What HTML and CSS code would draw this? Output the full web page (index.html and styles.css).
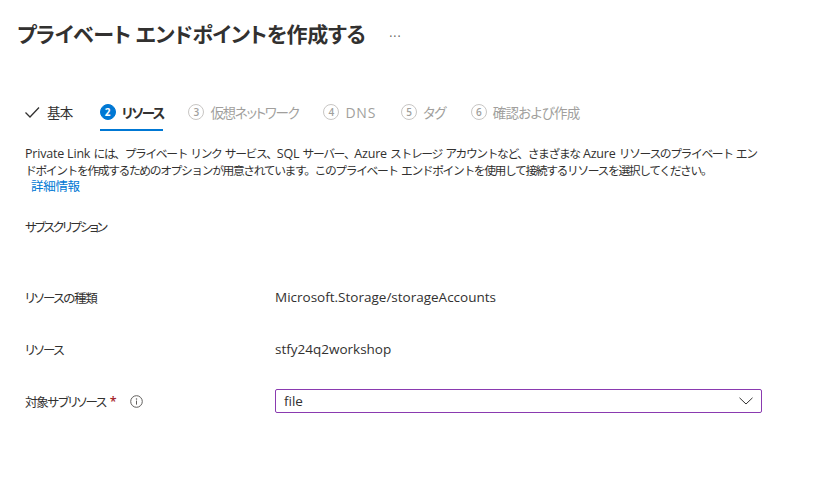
FILE: index.html
```html
<!DOCTYPE html>
<html lang="ja">
<head>
<meta charset="utf-8">
<link rel="stylesheet" href="styles.css">
</head>
<body>
<div class="page">
  <div class="title-row">
    <h1 class="title">プライベート エンドポイントを作成する</h1>
    <span class="more">···</span>
  </div>

  <nav class="tabs">
    <div class="tab done">
      <svg class="check" width="16" height="16" viewBox="0 0 16 16"><path d="M1.5 8.5 L6 13 L15 3.5" fill="none" stroke="#323130" stroke-width="1.3"/></svg>
      <span class="tl">基本</span>
    </div>
    <div class="tab active">
      <span class="num">2</span>
      <span class="tl kana">リソース</span>
    </div>
    <div class="tab">
      <span class="num">3</span>
      <span class="tl kana">仮想ネットワーク</span>
    </div>
    <div class="tab">
      <span class="num">4</span>
      <span class="tl latin">DNS</span>
    </div>
    <div class="tab">
      <span class="num">5</span>
      <span class="tl">タグ</span>
    </div>
    <div class="tab">
      <span class="num">6</span>
      <span class="tl">確認および作成</span>
    </div>
  </nav>

  <p class="desc"><span class="en">Private Link</span> には、プライベート リンク サービス、<span class="en">SQL</span> サーバー、<span class="en">Azure</span> ストレージ アカウントなど、さまざまな <span class="en">Azure</span> リソースのプライベート エン<br>ドポイントを作成するためのオプションが用意されています。このプライベート エンドポイントを使用して接続するリソースを選択してください。<br><a class="link" href="#">詳細情報</a></p>

  <div class="form">
    <div class="row sub">
      <div class="label">サブスクリプション</div>
      <div class="value"></div>
    </div>
    <div class="row">
      <div class="label">リソースの種類</div>
      <div class="value">Microsoft.Storage/storageAccounts</div>
    </div>
    <div class="row">
      <div class="label">リソース</div>
      <div class="value">stfy24q2workshop</div>
    </div>
    <div class="row">
      <div class="label">対象サブリソース<span class="req">*</span>
        <svg class="info" width="13" height="13" viewBox="0 0 13 13"><circle cx="6.5" cy="6.5" r="5.8" fill="none" stroke="#605e5c" stroke-width="1"/><circle cx="6.5" cy="3.9" r="0.75" fill="#605e5c"/><path d="M6.5 5.6 V9.6" stroke="#605e5c" stroke-width="1"/></svg>
      </div>
      <div class="value">
        <div class="select">
          <span>file</span>
          <svg class="chev" width="14" height="8" viewBox="0 0 14 8"><path d="M0.5 0.8 L7 7 L13.5 0.8" fill="none" stroke="#323130" stroke-width="1"/></svg>
        </div>
      </div>
    </div>
  </div>
</div>
</body>
</html>
```

FILE: styles.css
```css
html, body {
  margin: 0;
  padding: 0;
  background: #ffffff;
}
body {
  font-family: "Segoe UI", "Open Sans", "Noto Sans CJK JP", sans-serif;
  color: #323130;
  font-size: 13px;
}
.page {
  padding: 0 0 0 17px;
}
.title-row {
  display: flex;
  align-items: center;
  padding-top: 20px;
  height: 28px;
}
.title {
  margin: 0;
  font-size: 21px;
  font-weight: 600;
  line-height: 28px;
  color: #323130;
  letter-spacing: -0.4px;
  font-feature-settings: "palt";
}
.more {
  margin-left: 24px;
  font-size: 12px;
  color: #605e5c;
  letter-spacing: 1px;
  margin-top: 4px;
}
.tabs {
  display: flex;
  align-items: flex-start;
  margin-top: 52px;
  padding-left: 7px;
}
.tab {
  display: flex;
  align-items: center;
  gap: 6px;
  font-size: 13px;
  color: #a19f9d;
  height: 24px;
  padding-bottom: 5px;
  margin-right: 25px;
  border-bottom: 2px solid transparent;
}
.tl {
  font-feature-settings: "palt";
  letter-spacing: -0.7px;
  font-size: 13.5px;
}
.tl.kana {
  letter-spacing: -1.3px;
}
.tab.active .tl.kana {
  letter-spacing: -1.8px;
}
.tl.latin {
  letter-spacing: 0.8px;
  font-size: 14px;
}
.tab.done {
  color: #323130;
  gap: 7px;
  margin-right: 27px;
}
.tab.active {
  color: #323130;
  font-weight: 700;
  border-bottom-color: #0078d4;
}
.num {
  box-sizing: border-box;
  width: 16px;
  height: 16px;
  border-radius: 50%;
  border: 1px solid #c8c6c4;
  font-size: 10px;
  font-weight: 600;
  display: inline-flex;
  align-items: center;
  justify-content: center;
  color: #a19f9d;
  line-height: 1;
}
.tab.active .num {
  background: #0078d4;
  border-color: #0078d4;
  color: #ffffff;
  font-weight: 700;
}
.desc {
  margin: 14px 0 0 8px;
  white-space: nowrap;
  line-height: 16px;
  font-size: 11.8px;
  letter-spacing: -1.4px;
  word-spacing: 1.6px;
}
.en {
  font-size: 12.5px;
  letter-spacing: -0.2px;
  word-spacing: 0;
}
.link {
  color: #0078d4;
  text-decoration: none;
  margin-left: 6px;
  font-size: 12.5px;
  letter-spacing: -0.3px;
}
.form {
  margin-top: 19px;
  padding-left: 8px;
}
.row {
  display: grid;
  grid-template-columns: 250px 487px;
  align-items: center;
  height: 24px;
  margin-bottom: 28px;
}
.row.sub {
  margin-bottom: 47px;
}
.label {
  display: flex;
  align-items: center;
  font-size: 12.5px;
  font-feature-settings: "palt";
  letter-spacing: -1.3px;
}
.row.sub .label {
  letter-spacing: -2px;
}
.value {
  font-size: 13.5px;
}
.req {
  color: #a4262c;
  margin-left: 4px;
  font-weight: 600;
  letter-spacing: 0;
}
.info {
  margin-left: 13px;
}
.select {
  box-sizing: border-box;
  height: 24px;
  border: 1px solid #8a3ab0;
  border-radius: 2px;
  display: flex;
  align-items: center;
  justify-content: space-between;
  padding: 0 8px 0 8px;
}
```
